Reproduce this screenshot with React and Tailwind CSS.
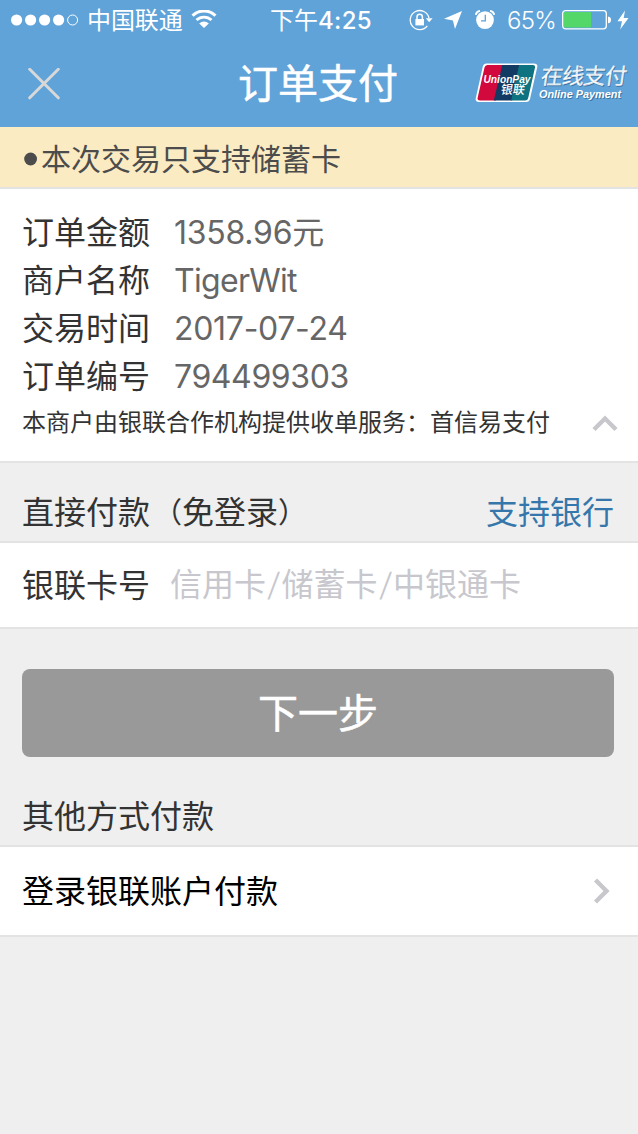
import React from "react";

const orderRows = [
  { label: "订单金额", value: "1358.96", unit: "元", tracking: "tracking-[-0.25px]" },
  { label: "商户名称", value: "TigerWit", tracking: "tracking-[-0.7px]" },
  { label: "交易时间", value: "2017-07-24", tracking: "tracking-[-0.3px]" },
  { label: "订单编号", value: "794499303", tracking: "tracking-[-0.4px]" },
];

function StatusBar() {
  return (
    <div className="relative flex h-10 items-center justify-between pl-[11px] pr-[9px] text-2xl leading-10">
      <div className="flex items-center">
        <svg width="68" height="12" viewBox="0 0 68 12" fill="#fff">
          <circle cx="5.6" cy="6" r="5.6" />
          <circle cx="19.6" cy="6" r="5.6" />
          <circle cx="33.6" cy="6" r="5.6" />
          <circle cx="47.6" cy="6" r="5.6" />
          <circle cx="61.6" cy="6" r="5" fill="none" stroke="#fff" strokeWidth="1" />
        </svg>
        <span className="ml-[8px] pt-px tracking-[-0.1px]">中国联通</span>
        <svg className="ml-[8px]" width="26" height="20" viewBox="0 0 26 20" fill="none" stroke="#fff">
          <path d="M1.5 5.6 A16.5 16.5 0 0 1 24.5 5.6" strokeWidth="3" />
          <path d="M5.5 10.1 A10.8 10.8 0 0 1 20.5 10.1" strokeWidth="2.8" />
          <path d="M13 18 L8.2 13.5 A7 7 0 0 1 17.8 13.5 Z" fill="#fff" stroke="none" />
        </svg>
      </div>
      <div className="absolute left-[270px] top-px whitespace-nowrap">
        下午<span className="font-medium tracking-[0.3px]">4:25</span>
      </div>
      <div className="flex items-center">
        <svg width="24" height="22" viewBox="0 0 24 22" fill="none" stroke="#fff" strokeWidth="1.3">
          <path d="M18.3 16.8 A9.5 9.5 0 1 1 20 9" />
          <path d="M16.8 9.2 H23.6 L20.2 13.2 Z" fill="#fff" stroke="none" />
          <rect x="6.4" y="10" width="8.6" height="6.4" fill="#fff" stroke="none" />
          <path d="M8 10.5 V8 A2.7 2.7 0 0 1 13.4 8 V10.5" strokeWidth="1.5" />
        </svg>
        <svg className="ml-[11px]" width="18" height="18" viewBox="0 0 18 18" fill="#fff">
          <path d="M18 0 L11 18 L8.9 9.6 L0 7.8 Z" />
        </svg>
        <svg className="ml-[13px]" width="20" height="20" viewBox="0 0 20 20" fill="#fff">
          <circle cx="10" cy="10.1" r="8.9" />
          <path d="M0.8 4.8 A5 5 0 0 1 5 0.9 M15 0.9 A5 5 0 0 1 19.2 4.8" fill="none" stroke="#fff" strokeWidth="1.9" />
          <path d="M10.3 4.8 V10.8 H6" fill="none" stroke="#5fa3d9" strokeWidth="1.3" />
        </svg>
        <span className="ml-[12px] w-[49px] whitespace-nowrap pt-px font-light tracking-[-0.7px]">65%</span>
        <svg className="ml-[6px]" width="49" height="20" viewBox="0 0 49 20">
          <rect x="0.7" y="0.7" width="43.6" height="18.2" rx="2.8" fill="none" stroke="#fff" strokeWidth="1.3" />
          <rect x="2" y="2" width="27" height="15.6" rx="1" fill="#53d769" />
          <path d="M46 6.5 Q49 7 49 9.9 Q49 12.8 46 13.3 Z" fill="#fff" />
        </svg>
        <svg className="ml-[6px]" width="12" height="20" viewBox="0 0 12 20" fill="#fff">
          <path d="M8 0.5 L0.5 11.2 H5 L3.2 19.5 L11.5 7.9 H6.7 Z" />
        </svg>
      </div>
    </div>
  );
}

function UnionPayLogo() {
  return (
    <svg className="overflow-visible" width="160" height="44" viewBox="0 0 160 44">
      <defs>
        <clipPath id="card">
          <path d="M12.5 3 H58 Q60.5 3 60 5.5 L53.2 36 Q52.7 38.5 50 38.5 H5 Q2 38.5 2.6 36 L9.5 5.5 Q10 3 12.5 3 Z" />
        </clipPath>
      </defs>
      <path d="M11.5 1.5 H59 Q63 1.5 62.2 5.2 L55 37 Q54.2 40 51 40 H4 Q0 40 0.8 36 L7.8 4.6 Q8.6 1.5 11.5 1.5 Z" fill="#fff" />
      <g clipPath="url(#card)">
        <path d="M0 0 H30 L19.5 44 H0 Z" fill="#d2093c" />
        <path d="M28 0 H46 L36 44 H17.5 Z" fill="#123a63" />
        <path d="M44.8 0 H66 V44 H34.8 Z" fill="#0e7380" />
      </g>
      <text x="8.5" y="20.5" fontSize="11.5" fontWeight="700" fontStyle="italic" fill="#fff" textLength="47" lengthAdjust="spacingAndGlyphs" fontFamily="Liberation Sans, sans-serif">UnionPay</text>
      <text x="25" y="32.5" transform="translate(5.5 0) skewX(-9)" fontSize="12.5" fontWeight="500" fill="#fff" textLength="24" lengthAdjust="spacingAndGlyphs" fontFamily="Noto Sans CJK SC, sans-serif">银联</text>
      <text x="66" y="22" transform="translate(2 0) skewX(-8)" fontSize="22" fill="#fff" stroke="#fff" strokeWidth="0.2" textLength="86" style={{ textShadow: "1px 1px 0 rgba(40,85,125,.6)" }} fontFamily="Noto Sans CJK SC, sans-serif">在线支付</text>
      <text x="64" y="35.5" fontSize="10" fontWeight="700" fontStyle="italic" fill="#fff" textLength="82" lengthAdjust="spacingAndGlyphs" style={{ textShadow: "1px 1px 0 rgba(40,85,125,.6)" }} fontFamily="Liberation Sans, sans-serif">Online Payment</text>
    </svg>
  );
}

export default function App() {
  return (
    <div className="flex h-[1134px] w-[638px] flex-col overflow-hidden bg-[#efefef] font-['Inter','Noto_Sans_CJK_SC',sans-serif] text-[32px] text-[#333]">
      <header className="h-[127px] shrink-0 bg-[#5fa3d9] text-white">
        <StatusBar />
        <div className="flex h-[87px] items-center justify-between pl-7 pr-[3px]">
          <button className="w-[160px]" aria-label="关闭">
            <svg width="32" height="32" viewBox="0 0 32 32" stroke="#d8d8d8" strokeWidth="3" strokeLinecap="round">
              <path d="M1.7 1.2 L30.3 29.8 M30.3 1.2 L1.7 29.8" />
            </svg>
          </button>
          <h1 className="mr-[27px] pt-px text-[40px] font-normal leading-[60px] [-webkit-text-stroke:0.5px_white]">订单支付</h1>
          <UnionPayLogo />
        </div>
      </header>

      <div className="flex h-[62px] shrink-0 items-center border-b-2 border-[#e3e3e3] bg-[#faebc2] pl-[23px] pt-[4px] text-[30px] text-[#4c4c4c]">
        <svg className="-mt-px mr-1" width="14" height="14" viewBox="0 0 14 14">
          <circle cx="7.6" cy="7" r="6.4" fill="#4c4c4c" />
        </svg>
        本次交易只支持储蓄卡
      </div>

      <section className="h-[274px] shrink-0 border-b-2 border-[#e3e3e3] bg-white px-[22px] pt-5">
        {orderRows.map((row) => (
          <div key={row.label} className="flex h-12 items-center leading-[48px]">
            <span className="w-[152px]">{row.label}</span>
            <span className="text-[#666]">
              <span className={row.tracking}>{row.value}</span>
              {row.unit}
            </span>
          </div>
        ))}
        <div className="flex h-11 items-center justify-between text-2xl leading-[44px]">
          <span>本商户由银联合作机构提供收单服务：首信易支付</span>
          <svg className="-mr-0.5 -mt-px" width="26" height="18" viewBox="0 0 26 18" fill="none" stroke="#c7c7cc" strokeWidth="4.4">
            <path d="M2 15.5 L13 4.5 L24 15.5" />
          </svg>
        </div>
      </section>

      <div className="flex h-20 shrink-0 items-end justify-between border-b-2 border-[#e3e3e3] pl-[22px] pr-6 leading-[57px]">
        <span>
          直接付款<span className="inline-block origin-right scale-[0.9]">（</span>免登录<span className="inline-block origin-left scale-[0.9]">）</span>
        </span>
        <a className="text-[#3577ab]">支持银行</a>
      </div>
      <div className="flex h-[86px] shrink-0 items-center border-b-2 border-[#e3e3e3] bg-white pl-[22px] pt-px leading-[60px]">
        <span className="w-[148px]">银联卡号</span>
        <span className="-mt-0.5 text-[#c7c7cd]">
          信用卡<span className="inline-block -skew-x-6 px-[2.2px] font-light">/</span>储蓄卡<span className="inline-block -skew-x-6 px-[2.2px] font-light">/</span>中银通卡
        </span>
      </div>

      <button className="ml-[22px] mt-10 h-[88px] w-[592px] shrink-0 rounded-lg bg-[#999] text-[40px] leading-[89px] text-white [-webkit-text-stroke:0.5px_white]">
        下一步
      </button>

      <div className="mt-[28px] flex h-[62px] shrink-0 items-center border-b-2 border-[#e3e3e3] pl-[22px] pt-1 leading-[56px]">其他方式付款</div>
      <div className="flex h-[90px] shrink-0 items-center justify-between border-b-2 border-[#e3e3e3] bg-white pl-[22px] pr-[27px] text-black">
        <span className="pt-0.5">登录银联账户付款</span>
        <svg width="18" height="26" viewBox="0 0 18 26" fill="none" stroke="#c7c7cc" strokeWidth="4.4">
          <path d="M2.5 2 L13.5 13 L2.5 24" />
        </svg>
      </div>
    </div>
  );
}
